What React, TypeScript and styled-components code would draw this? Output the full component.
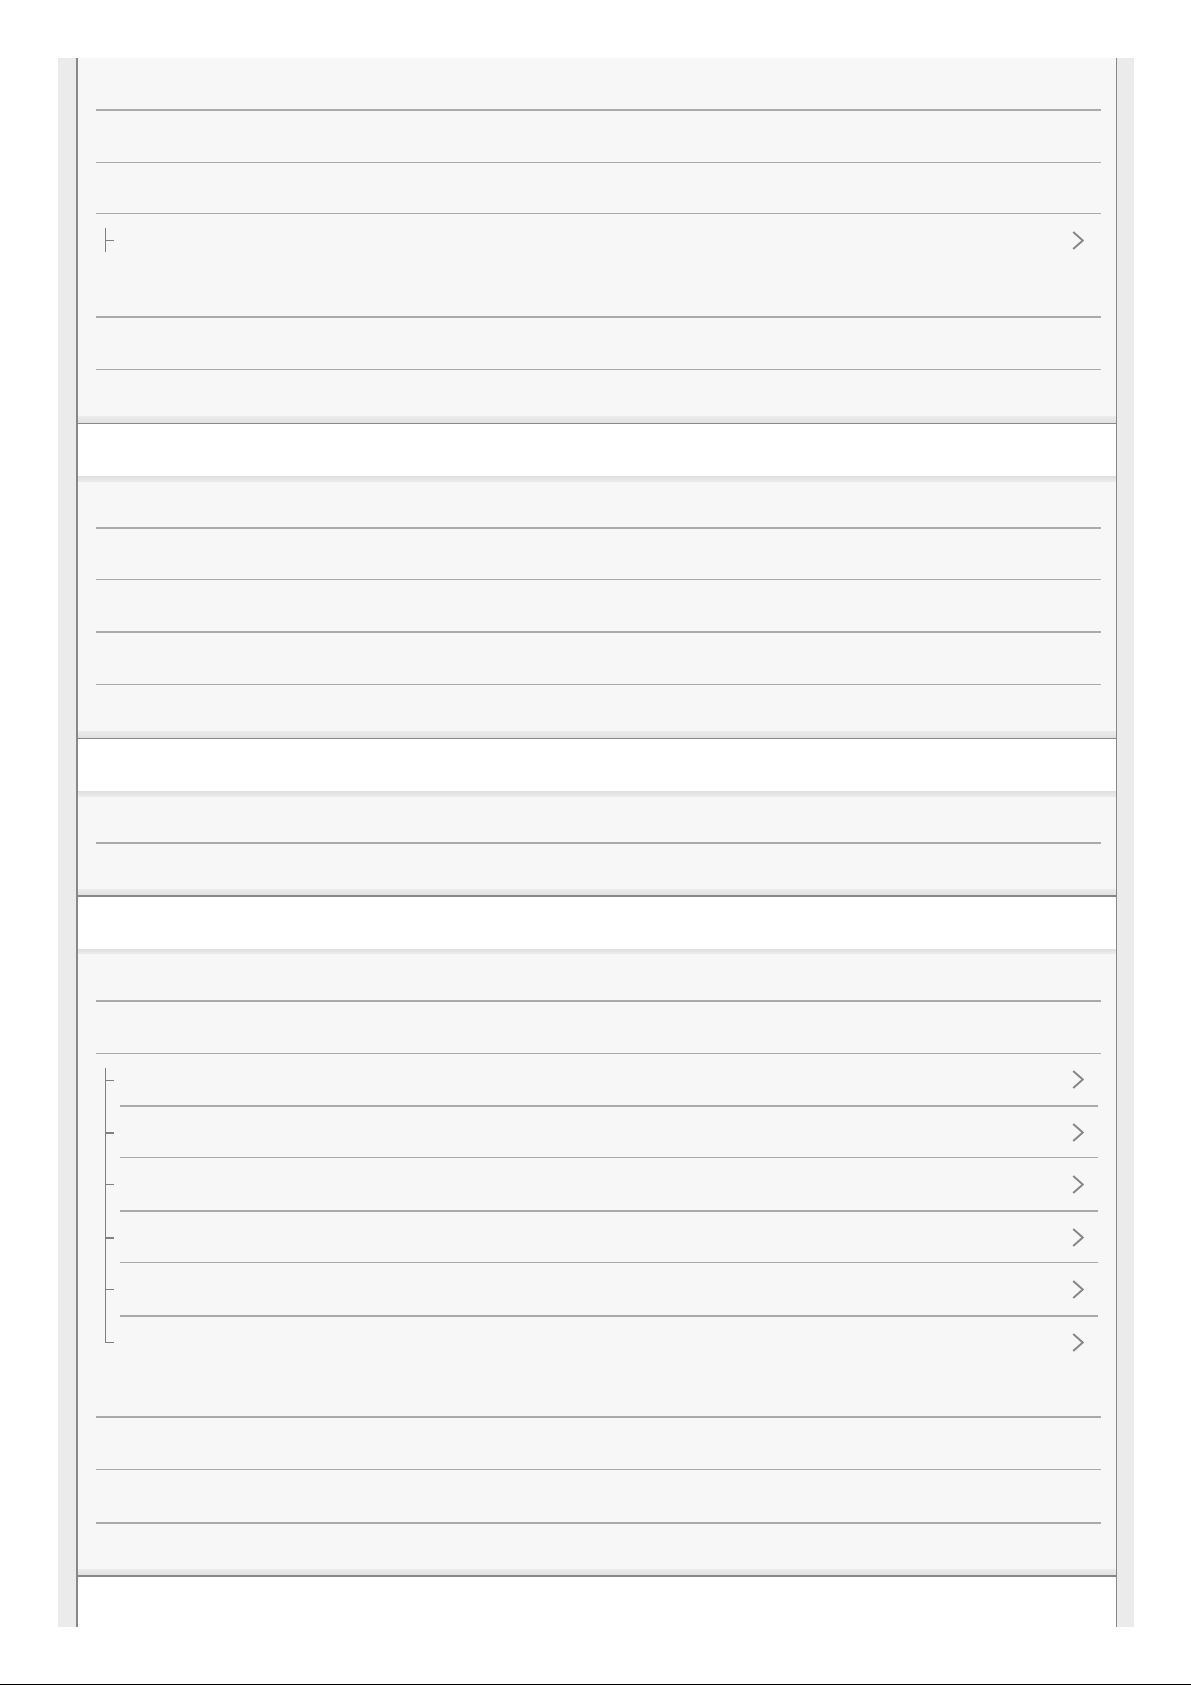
import { createGlobalStyle, styled } from "styled-components";

const GlobalStyle = createGlobalStyle`
  html, body {
    margin: 0;
    padding: 0;
    background: #ffffff;
    font-family: "Liberation Sans", Arial, sans-serif;
  }
  * {
    box-sizing: border-box;
  }
`;

const Page = styled.div`
  height: 1685px;
  padding-top: 58px;
  border-bottom: 1px solid #000;
`;

const Frame = styled.div`
  margin-left: 58px;
  width: 1076px;
  padding: 0 17px 0 18px;
  background: #ebebeb;
`;

const Column = styled.div`
  border-left: 2px solid #888;
  border-right: 1px solid #888;
  background: #f7f7f7;
`;

const Section = styled.ul`
  margin: 0;
  padding: 0 15px 0 18px;
  list-style: none;
  background: #f7f7f7;
`;

const Row = styled.li<{ $h: number; $b: number }>`
  height: ${(p) => p.$h}px;
  border-top: ${(p) => p.$b}px solid #aaa;
`;

const TreeRow = styled.li<{ $h: number; $b: number; $pad: number }>`
  height: ${(p) => p.$h}px;
  border-top: ${(p) => p.$b}px solid #aaa;
  padding-bottom: ${(p) => p.$pad}px;
`;

const TreeList = styled.ul`
  margin: 0 3px 0 24px;
  padding: 0;
  list-style: none;
`;

const TreeItem = styled.li<{
  $h: number;
  $b: number;
  $tick: number;
  $first?: boolean;
  $last?: boolean;
  $single?: boolean;
}>`
  position: relative;
  height: ${(p) => p.$h}px;
  border-top: ${(p) => p.$b}px solid #aaa;
  display: flex;
  align-items: center;
  justify-content: flex-end;
  padding-right: 14px;

  &::before {
    content: "";
    position: absolute;
    left: -15px;
    width: 1px;
    background: #808080;
    top: ${(p) => (p.$first ? "14px" : `-${p.$b}px`)};
    bottom: ${(p) =>
      p.$single ? "calc(50% - 12px)" : p.$last ? "calc(50% - 1px)" : "0"};
  }

  &::after {
    content: "";
    position: absolute;
    left: -15px;
    top: 50%;
    width: 9px;
    height: ${(p) => p.$tick}px;
    background: #808080;
  }
`;

const Chevron = styled.svg`
  width: 12px;
  height: 19px;
  flex: none;
`;

const Header = styled.div<{ $top: number; $bottom: number }>`
  &::before {
    content: "";
    display: block;
    height: ${(p) => p.$top}px;
    background: linear-gradient(#ececec, #e1e1e1);
  }
  &::after {
    content: "";
    display: block;
    height: ${(p) => p.$bottom}px;
    background: linear-gradient(#dfdfdf, #ececec);
  }
`;

const HeaderBody = styled.div<{ $b: number; $h: number }>`
  height: ${(p) => p.$h + p.$b}px;
  border-top: ${(p) => p.$b}px solid #888;
  background: #ffffff;
`;

const Arrow = () => (
  <Chevron viewBox="0 0 12 19">
    <polyline
      points="1.2,1 10.8,9.5 1.2,18"
      fill="none"
      stroke="#858585"
      strokeWidth="2"
    />
  </Chevron>
);

type SubSpec = [number, number, number];

const HeaderBlock = ({ top, b, h, bottom }: { top: number; b: number; h: number; bottom: number }) => (
  <Header $top={top} $bottom={bottom}>
    <HeaderBody $b={b} $h={h} />
  </Header>
);

// height, border, tick thickness
const subItems: SubSpec[] = [
  [51, 0, 1],
  [52, 2, 2],
  [53, 1, 1],
  [52, 2, 2],
  [53, 1, 1],
  [52, 2, 1],
];

export default function App() {
  return (
    <>
      <GlobalStyle />
      <Page>
        <Frame>
          <Column>
            <Section>
              <Row $h={51} $b={0} />
              <Row $h={53} $b={2} />
              <Row $h={51} $b={1} />
              <TreeRow $h={103} $b={1} $pad={50}>
                <TreeList>
                  <TreeItem $h={52} $b={0} $tick={1} $first $last $single>
                    <Arrow />
                  </TreeItem>
                </TreeList>
              </TreeRow>
              <Row $h={53} $b={2} />
              <Row $h={47} $b={1} />
            </Section>
            <HeaderBlock top={7} b={1} h={52} bottom={6} />
            <Section>
              <Row $h={45} $b={0} />
              <Row $h={52} $b={2} />
              <Row $h={52} $b={1} />
              <Row $h={53} $b={2} />
              <Row $h={47} $b={1} />
            </Section>
            <HeaderBlock top={7} b={1} h={52} bottom={6} />
            <Section>
              <Row $h={45} $b={0} />
              <Row $h={47} $b={2} />
            </Section>
            <HeaderBlock top={6} b={2} h={52} bottom={5} />
            <Section>
              <Row $h={46} $b={0} />
              <Row $h={53} $b={2} />
              <TreeRow $h={363} $b={1} $pad={49}>
                <TreeList>
                  {subItems.map(([h, b, t], i) => (
                    <TreeItem
                      key={i}
                      $h={h}
                      $b={b}
                      $tick={t}
                      $first={i === 0}
                      $last={i === subItems.length - 1}
                    >
                      <Arrow />
                    </TreeItem>
                  ))}
                </TreeList>
              </TreeRow>
              <Row $h={53} $b={2} />
              <Row $h={53} $b={1} />
              <Row $h={47} $b={2} />
            </Section>
            <HeaderBlock top={6} b={2} h={50} bottom={0} />
          </Column>
        </Frame>
      </Page>
    </>
  );
}
